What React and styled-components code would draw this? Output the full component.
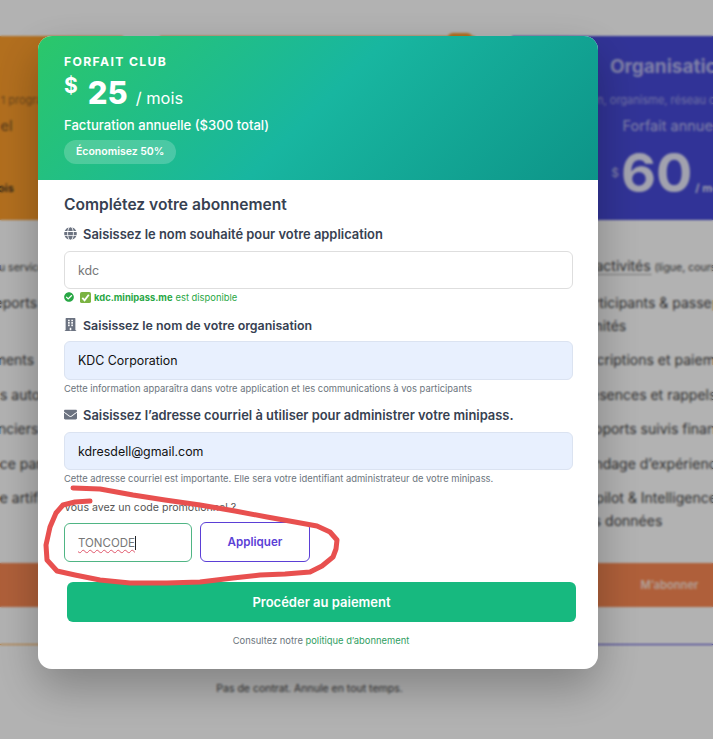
import React from "react";
import styled, { createGlobalStyle } from "styled-components";
import { FaGlobe, FaBuilding, FaEnvelope, FaCheckCircle } from "react-icons/fa";

const Global = createGlobalStyle`
  html, body { margin: 0; padding: 0; background: #fff; }
  * { box-sizing: border-box; }
  body { font-family: Inter, "Noto Sans", sans-serif; }
`;

const Viewport = styled.div`
  position: relative;
  width: 713px;
  height: 739px;
  overflow: hidden;
`;

const Pricing = styled.div`
  display: grid;
  grid-template-columns: repeat(3, 315px);
  column-gap: 37px;
  margin-left: -192px;
  padding-top: 36px;
  width: 1019px;
`;

const Plan = styled.section`
  position: relative;
  display: flex;
  flex-direction: column;
`;

const Tab = styled.div`
  position: absolute;
  top: -3px;
  right: 2px;
  width: 26px;
  height: 6px;
  border-radius: 6px 6px 0 0;
  background: #ff9f2c;
`;

const PlanHead = styled.div`
  height: 184px;
  padding-top: 18px;
  display: flex;
  flex-direction: column;
  align-items: center;
  color: ${(p) => p.$ink};
  background: ${(p) => p.$bg};
`;

const PlanTitle = styled.div`
  font-size: 19px;
  font-weight: 700;
  line-height: 26px;
  opacity: 0.6;
`;

const PlanSub = styled.div`
  margin-top: 13px;
  font-size: 11px;
  line-height: 14px;
  white-space: nowrap;
  opacity: 0.45;
`;

const PlanPeriod = styled.div`
  margin-top: 9px;
  font-size: 14.5px;
  line-height: 20px;
  opacity: 0.6;
`;

const PlanPrice = styled.div`
  display: flex;
  align-items: flex-end;
  font-weight: 700;
  font-size: 54px;
  line-height: 56px;
  margin-top: 9px;
  padding-right: ${(p) => p.$pad || 0}px;
  opacity: 0.88;
`;

const PlanCurrency = styled.span`
  font-size: 12px;
  font-weight: 400;
  line-height: 14px;
  align-self: center;
  margin-right: 2px;
  opacity: 0.7;
`;

const PlanUnit = styled.span`
  font-size: 11px;
  font-weight: 600;
  line-height: 20px;
  margin-left: 3px;
  margin-bottom: 3px;
`;

const Features = styled.ul`
  list-style: none;
  margin: 0;
  padding: 34px 0 0 ${(p) => p.$indent}px;
  height: 343px;
  font-size: 14px;
  line-height: 23px;
  color: #444;
`;

const Feature = styled.li`
  margin-bottom: 11.5px;
  white-space: nowrap;
`;

const Dotted = styled.span`
  border-bottom: 1px dotted #555;
`;

const Tiny = styled.small`
  font-size: 10.5px;
`;

const Cta = styled.div`
  height: 44px;
  display: flex;
  align-items: center;
  justify-content: center;
  font-size: 11.2px;
  font-weight: 600;
  color: rgba(255, 255, 255, 0.8);
  background: #fb8953;
`;

const Rule = styled.hr`
  margin: 37px 0 0;
  border: 0;
  border-top: 1.5px solid ${(p) => p.$color};
`;

const Fine = styled.p`
  margin: 75px 0 0;
  padding-right: 16px;
  text-align: center;
  font-size: 10.5px;
  line-height: 13px;
  color: #444;
`;

const Backdrop = styled.div`
  position: absolute;
  inset: 0;
  padding: 36px 0 0 38px;
  background: rgba(0, 0, 0, 0.3);
  backdrop-filter: blur(0.8px);
`;

const Modal = styled.div`
  width: 560px;
  height: 633px;
  border-radius: 14px;
  overflow: hidden;
  background: #fff;
`;

const ModalShadow = styled.div`
  width: 560px;
  border-radius: 14px;
  box-shadow: 0 18px 45px rgba(0, 0, 0, 0.28);
`;

const Head = styled.header`
  height: 144px;
  padding: 18px 26px 0;
  color: #fff;
  background: linear-gradient(135deg, #2bc76a 0%, #18b6a0 50%, #0d9488 100%);
`;

const Eyebrow = styled.div`
  font-size: 12.2px;
  line-height: 15px;
  font-weight: 700;
  letter-spacing: 1.35px;
`;

const PriceRow = styled.div`
  display: flex;
  align-items: baseline;
  height: 38px;
  margin-top: 5px;
`;

const Dollar = styled.span`
  font-size: 21px;
  font-weight: 700;
  align-self: flex-start;
  line-height: 24px;
  margin-right: 10px;
`;

const Amount = styled.span`
  font-size: 31px;
  font-weight: 800;
  line-height: 38px;
  margin-right: 8px;
`;

const Unit = styled.span`
  font-size: 16.4px;
`;

const Billing = styled.div`
  margin-top: 4px;
  font-size: 13.1px;
  line-height: 18px;
  font-weight: 500;
`;

const Pill = styled.div`
  display: inline-block;
  margin-top: 6px;
  height: 24px;
  padding: 0 12px;
  border-radius: 12px;
  font-size: 10.5px;
  font-weight: 600;
  line-height: 24px;
  background: rgba(255, 255, 255, 0.2);
`;

const Body = styled.div`
  padding: 15px 25px 0 26px;
`;

const Title = styled.h2`
  margin: 0;
  font-size: 15.6px;
  line-height: 20px;
  font-weight: 600;
  color: #374151;
`;

const Label = styled.label`
  display: flex;
  align-items: center;
  gap: 6px;
  height: 16px;
  margin-top: ${(p) => p.$top}px;
  font-size: ${(p) => p.$size || 12.9}px;
  font-weight: 600;
  color: #374151;
  white-space: nowrap;
  svg { color: #6b7280; flex: none; font-size: 13px; margin-top: -2px; }
`;

const Field = styled.input`
  display: block;
  width: 100%;
  height: ${(p) => p.$h || 38}px;
  margin-top: ${(p) => p.$top}px;
  padding: 0 13px;
  border: 1px solid ${(p) => (p.$filled ? "#dbe3f1" : "#dedede")};
  border-radius: 6px;
  outline: none;
  font: 400 12.4px Inter, sans-serif;
  color: #111;
  background: ${(p) => (p.$filled ? "#e8f0fe" : "#fff")};
  &::placeholder { color: #777; }
`;

const Status = styled.div`
  display: flex;
  align-items: center;
  height: 14px;
  margin-top: 1px;
  font-size: 9.4px;
  color: #28a745;
  svg { flex: none; }
  b { font-weight: 700; margin-right: 3px; }
`;

const Emoji = styled.svg`
  width: 11px;
  height: 11px;
  margin: 0 3px 0 6px;
`;

const Note = styled.p`
  margin: 3px 0 0;
  font-size: 9.4px;
  line-height: 12px;
  color: #6c757d;
  white-space: nowrap;
`;

const PromoLabel = styled.p`
  margin: 16px 0 0;
  font-size: 10.6px;
  line-height: 14px;
  color: #555;
`;

const PromoRow = styled.div`
  display: flex;
  align-items: flex-end;
  gap: 8px;
  margin-top: 7px;
`;

const PromoField = styled.div`
  display: flex;
  align-items: center;
  width: 128px;
  height: 39px;
  padding: 0 13px;
  border: 1px solid #4fb584;
  border-radius: 6px;
  font-size: 11.5px;
  color: #777;
`;

const Typed = styled.span`
  text-decoration: underline wavy #e0556a 1px;
  text-underline-offset: 2px;
  border-right: 1px solid #222;
`;

const Apply = styled.button`
  width: 110px;
  height: 40px;
  border: 1px solid #5b3fd6;
  border-radius: 6px;
  background: #fff;
  color: #5b3fd6;
  font: 600 11.6px Inter, sans-serif;
`;

const Pay = styled.button`
  display: block;
  width: 509px;
  height: 40px;
  margin: 20px 0 0 3px;
  border: 0;
  border-radius: 6px;
  background: #17b97f;
  color: #fff;
  font: 600 13px Inter, sans-serif;
`;

const Policy = styled.p`
  margin: 13px 0 0;
  padding-left: 5px;
  text-align: center;
  font-size: 9.4px;
  line-height: 12px;
  color: #6c757d;
  a { color: #2f9e62; text-decoration: none; }
`;

const Scribble = styled.svg`
  position: absolute;
  left: 0;
  top: 0;
  width: 713px;
  height: 739px;
  pointer-events: none;
`;

const featureRows = [
  <>Participants &amp; passeports<br />illimités</>,
  "Inscriptions et paiements",
  "Présences et rappels automatisés",
  "Rapports suivis financiers",
  "Sondage d’expérience participants",
  <>Copilot &amp; Intelligence artificielle<br />des données</>,
];

const PlanColumn = ({ bg, ink, title, sub, amount, pad, first, indent, rule, tab, footer }) => (
  <Plan>
    {tab && <Tab />}
    <PlanHead $bg={bg} $ink={ink}>
      <PlanTitle>{title}</PlanTitle>
      <PlanSub>{sub}</PlanSub>
      <PlanPeriod>Forfait annuel</PlanPeriod>
      <PlanPrice $pad={pad}>
        <PlanCurrency>$</PlanCurrency>
        {amount}
        <PlanUnit>/ mois</PlanUnit>
      </PlanPrice>
    </PlanHead>
    <Features $indent={indent}>
      <Feature>{first}</Feature>
      {featureRows.map((f, i) => (
        <Feature key={i}>{f}</Feature>
      ))}
    </Features>
    <Cta>M’abonner</Cta>
    {footer ? <Fine>{footer}</Fine> : <Rule $color={rule} />}
  </Plan>
);

export default function App() {
  return (
    <Viewport>
      <Global />
      <Pricing>
        <PlanColumn
          bg="#ff9f2c"
          ink="#222"
          title="Club"
          sub="Idéal pour votre club avec 1 programme"
          amount="30"
          pad={20}
          indent={60}
          first={<>1 programme <Tiny>(cours ou service)</Tiny></>}
          rule="#ff9f2c"
        />
        <PlanColumn
          bg="#ff9f2c"
          ink="#222"
          title="Club"
          sub="Idéal pour un club"
          amount="25"
          indent={62}
          first="Activités"
          tab
          footer="Pas de contrat. Annule en tout temps."
        />
        <PlanColumn
          bg="#474ad8"
          ink="#fff"
          title="Organisation"
          sub="Association, organisme, réseau de clubs sportifs"
          amount="60"
          indent={65}
          first={<>10 <Dotted>activités</Dotted> <Tiny>(ligue, cours)</Tiny></>}
          rule="#3b32d0"
        />
      </Pricing>
      <Backdrop>
        <ModalShadow>
          <Modal>
            <Head>
              <Eyebrow>FORFAIT CLUB</Eyebrow>
              <PriceRow>
                <Dollar>$</Dollar>
                <Amount>25</Amount>
                <Unit>/ mois</Unit>
              </PriceRow>
              <Billing>Facturation annuelle ($300 total)</Billing>
              <Pill>Économisez 50%</Pill>
            </Head>
            <Body>
              <Title>Complétez votre abonnement</Title>
              <Label $top={11}><FaGlobe />Saisissez le nom souhaité pour votre application</Label>
              <Field $top={9} placeholder="kdc" />
              <Status>
                <FaCheckCircle size={10} />
                <Emoji viewBox="0 0 12 12">
                  <rect width="12" height="12" rx="2" fill="#7bb342" />
                  <path d="M2.5 6.3 5 9l4.6-6" fill="none" stroke="#fff" strokeWidth="2" />
                </Emoji>
                <b>kdc.minipass.me</b> est disponible
              </Status>
              <Label $top={13} $size={12.4}><FaBuilding />Saisissez le nom de votre organisation</Label>
              <Field $top={8} $h={39} $filled defaultValue="KDC Corporation" />
              <Note>Cette information apparaîtra dans votre application et les communications à vos participants</Note>
              <Label $top={12}><FaEnvelope />Saisissez l’adresse courriel à utiliser pour administrer votre minipass.</Label>
              <Field $top={9} $filled defaultValue="kdresdell@gmail.com" />
              <Note>Cette adresse courriel est importante. Elle sera votre identifiant administrateur de votre minipass.</Note>
              <PromoLabel>Vous avez un code promotionnel ?</PromoLabel>
              <PromoRow>
                <PromoField><Typed>TONCODE</Typed></PromoField>
                <Apply>Appliquer</Apply>
              </PromoRow>
              <Pay>Procéder au paiement</Pay>
              <Policy>Consultez notre <a href="#politique">politique d’abonnement</a></Policy>
            </Body>
          </Modal>
        </ModalShadow>
      </Backdrop>
      <Scribble viewBox="0 0 713 739">
        <path
          d="M73 488 L100 489 L133 495 L165 500 L200 505 L235 511 L267 517 L295 522 L317 526 L330 532 L337 540 L336 549 L333 557 L322 566 L310 572 L285 574 L260 575 L233 578 L200 582 L167 583 L130 583 L100 580 L75 575 L57 571 L47 560 L46 545 L50 527 L56 513 L63 505 L75 502 L90 501"
          fill="none"
          stroke="#e8504f"
          strokeWidth="5"
          strokeLinecap="round"
          strokeLinejoin="round"
        />
      </Scribble>
    </Viewport>
  );
}
